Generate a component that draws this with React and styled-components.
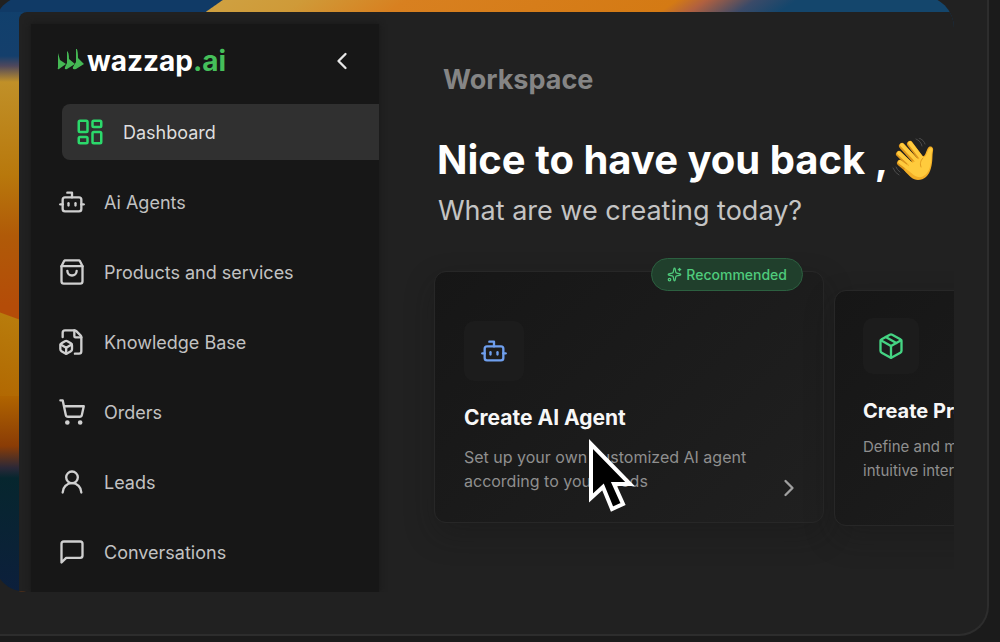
import React from "react";
import styled, { createGlobalStyle } from "styled-components";
import {
  Bot,
  ChevronLeft,
  ChevronRight,
  FileBox,
  LayoutDashboard,
  Package,
  ShoppingCart,
  Sparkles,
  UserRound,
} from "lucide-react";

const GlobalStyle = createGlobalStyle`
* { box-sizing: border-box; }
body {
  margin: 0;
  background: #1b1b1b;
  font-family: Inter, "Liberation Sans", sans-serif;
}
h1, h2, h3, p { margin: 0; }
`;

const Panel = styled.div`
margin-right: 11px;
overflow: hidden;
background: #212121;
border: solid #2d2d2d;
border-width: 0 2px 2px 0;
border-radius: 0 0 30px 0;
`;

const Media = styled.div`
margin: -4px 33px 42px -6px;
padding: 16px 0 0 25px;
overflow: hidden;
border-radius: 32px 32px 0 32px;
background:
  linear-gradient(145deg, #103a66 0, #103a66 134px, #cfa040 135px, #cf9a38 180px, #d88020 240px, #d47a14 395px, #b06040 412px, #3a4a68 440px, #14466c 464px, #14466c 100%) 0 0 / 960px 16px no-repeat,
  linear-gradient(180deg, #b06400 0, #8a3c06 50px, #2a2838 72px, #06262e 82px, #0a2236 150px, #0c1f3c 100%) 0 400px / 25px 196px no-repeat,
  linear-gradient(200deg, transparent 0, transparent 294px, #b87c0c 295px, #b06400 390px) 0 10px / 25px 586px no-repeat,
  linear-gradient(180deg, #10406c 0, #143f6c 60px, #50485c 70px, #c09028 86px, #b8780c 180px, #b05a08 240px, #b44c08 310px) 0 0 / 100% 100% no-repeat;
`;

const Window = styled.div`
display: flex;
background: #212121;
border-radius: 8px 0 0 0;
`;

const Sidebar = styled.aside`
flex: 0 0 348px;
margin: 12px 0 0 12px;
padding-bottom: 12px;
background: #171717;
box-shadow: 0 0 6px #171717;
`;

const Brand = styled.div`
display: flex;
align-items: center;
justify-content: space-between;
height: 74px;
padding: 0 23px 0 26px;
`;

const Logo = styled.a`
display: flex;
align-items: center;
color: #ffffff;
font-size: 28px;
font-weight: 700;
line-height: 32px;
text-decoration: none;
svg { margin-right: 3px; }
span { color: #45bf5a; }
`;

const IconButton = styled.button`
display: flex;
padding: 0;
border: 0;
background: none;
color: ${(props) => props.$color || "#e8e8e8"};
`;

const Nav = styled.nav`
display: flex;
flex-direction: column;
gap: 14px;
margin-top: 6px;
padding-left: 27px;
`;

const NavLink = styled.a`
display: flex;
align-items: center;
gap: 18px;
height: 56px;
margin-left: ${(props) => (props.$active ? "4px" : "0")};
padding-left: ${(props) => (props.$active ? "13px" : "0")};
border-radius: 8px 0 0 8px;
background: ${(props) => (props.$active ? "#303030" : "none")};
color: ${(props) => (props.$active ? "#dedede" : "#c2c2c2")};
font-size: 18px;
text-decoration: none;
svg { color: ${(props) => (props.$active ? "#2bd96b" : "#d0d0d0")}; }
`;

const Main = styled.main`
flex: 1;
min-width: 0;
padding: 52px 0 0 55px;
`;

const Section = styled.h2`
padding-left: 9px;
color: #858585;
font-size: 27px;
font-weight: 700;
line-height: 32px;
`;

const Greeting = styled.h1`
display: flex;
align-items: center;
gap: 4px;
margin-top: 40px;
padding-left: 3px;
color: #ffffff;
font-size: 40px;
font-weight: 700;
line-height: 48px;
white-space: nowrap;
`;

const Question = styled.p`
margin-top: 11px;
padding-left: 4px;
color: #c4c4c4;
font-size: 27px;
line-height: 32px;
`;

const Cards = styled.div`
display: flex;
align-items: flex-start;
gap: 10px;
margin-top: 44px;
`;

const Card = styled.article`
position: relative;
flex: 0 0 ${(props) => (props.$featured ? "390px" : "372px")};
margin-top: ${(props) => (props.$featured ? "0" : "19px")};
padding: ${(props) => (props.$featured ? "49px 29px 29px" : "27px 28px 42px")};
border: 1px solid #272727;
border-radius: 12px;
background: linear-gradient(135deg, #161616, #1a1a1a 40%, #202020);
box-shadow: 0 12px 30px rgba(20, 20, 20, 0.3);
`;

const IconTile = styled.div`
display: flex;
align-items: center;
justify-content: center;
width: ${(props) => (props.$featured ? "60px" : "56px")};
height: ${(props) => (props.$featured ? "60px" : "56px")};
border-radius: 10px;
background: #1c1c1c;
color: ${(props) => props.$color};
`;

const CardTitle = styled.h3`
margin-top: 23px;
color: #f7f7f7;
font-size: ${(props) => (props.$featured ? "21px" : "20px")};
font-weight: 700;
line-height: 28px;
white-space: nowrap;
`;

const CardText = styled.p`
margin-top: ${(props) => (props.$featured ? "13px" : "10px")};
color: #8f8f8f;
font-size: ${(props) => (props.$featured ? "16px" : "15px")};
line-height: 24px;
`;

const Badge = styled.span`
position: absolute;
top: -14px;
right: 20px;
display: flex;
align-items: center;
gap: 4px;
height: 33px;
padding: 0 15px;
border: 1px solid #2c6040;
border-radius: 17px;
background: #203f2c;
color: #4fcb7c;
font-size: 14px;
font-weight: 500;
`;

const CardArrow = styled(IconButton)`
position: absolute;
right: 20px;
bottom: 20px;
`;

const Pointer = styled.svg`
position: absolute;
top: 164px;
left: 152px;
`;

const LogoMark = () => (
  <svg width="27" height="24" viewBox="0 0 27 24" fill="#45b854">
    <path d="M1 4 L3 11 L9 15 L2 20 Q0 21 1 18 Z" />
    <path d="M10 2 Q12 3 12 10 L18 15 L10 20 Q7 21 8 18 L10 14 Z" />
    <path d="M19 -1 Q21 0 21 9 L27 15 L19 20 Q15 21 16 18 L19 13 Z" />
  </svg>
);

const BagIcon = ({ size }) => (
  <svg width={size} height={size} viewBox="0 0 24 24" fill="none" stroke="currentColor" strokeWidth="2" strokeLinecap="round" strokeLinejoin="round">
    <path d="M3 7v13a2 2 0 0 0 2 2h14a2 2 0 0 0 2-2V7l-2-4a2 2 0 0 0-1-1H6a2 2 0 0 0-1 1Z" />
    <path d="M3 7h18" />
    <path d="M16 11a4 4 0 0 1-8 0" />
  </svg>
);

const MessageIcon = ({ size }) => (
  <svg width={size} height={size} viewBox="0 0 24 24" fill="none" stroke="currentColor" strokeWidth="2" strokeLinecap="round" strokeLinejoin="round">
    <path d="M21 15a2 2 0 0 1-2 2H7l-4 4V5a2 2 0 0 1 2-2h14a2 2 0 0 1 2 2z" />
  </svg>
);

const WavingHand = () => (
  <svg width="42" height="44" viewBox="0 0 42 44" fill="none" strokeLinecap="round" strokeLinejoin="round" role="img" aria-label="Waving hand">
    <g stroke="#dc951c" strokeWidth="6">
      <path d="M18 6 L30 22" />
      <path d="M10 8 L26 26" />
      <path d="M7 16 L22 31" />
      <path d="M8 25 L20 35" />
    </g>
    <path d="M15 26 L30 18 C33 20 34 13 36 10 C38 7 42 9 41 13 C40 18 41 23 39 30 C37 38 32 42 26 42 C21 42 17 38 12 32 Z" fill="#f3ae25" />
    <g stroke="#ffcb3d" strokeWidth="4">
      <path d="M18 5 L31 22" />
      <path d="M10 7 L27 25" />
      <path d="M7 15 L22 29" />
      <path d="M8 24 L20 33" />
    </g>
    <path d="M17 27 L30 19 C34 21 35 14 37 11 C39 9 41 10 40 13 C39 18 40 23 38 29 C36 36 31 40 26 39 C22 38 19 35 16 31 Z" fill="#ffcb3d" />
    <path d="M31 20 C28 23 28 26 29 29" stroke="#e09a1e" strokeWidth="1" />
    <path d="M24 1 Q29 3 30 8 M27 0 Q32 2 33 6 M1 30 Q3 35 7 37 M4 29 Q5 32 8 34" stroke="#4c4c4c" strokeWidth="1" />
  </svg>
);

const links = [
  { label: "Dashboard", icon: LayoutDashboard, active: true },
  { label: "Ai Agents", icon: Bot },
  { label: "Products and services", icon: BagIcon },
  { label: "Knowledge Base", icon: FileBox },
  { label: "Orders", icon: ShoppingCart },
  { label: "Leads", icon: UserRound },
  { label: "Conversations", icon: MessageIcon },
];

const App = () => {
  return (
    <>
      <GlobalStyle />
      <Panel>
        <Media>
          <Window>
            <Sidebar>
              <Brand>
                <Logo href="#">
                  <LogoMark />
                  wazzap<span>.ai</span>
                </Logo>
                <IconButton type="button" aria-label="Collapse menu">
                  <ChevronLeft size={28} />
                </IconButton>
              </Brand>
              <Nav>
                {links.map(({ label, icon: Icon, active }) => (
                  <NavLink href="#" key={label} $active={active}>
                    <Icon size={active ? 30 : 28} />
                    {label}
                  </NavLink>
                ))}
              </Nav>
            </Sidebar>
            <Main>
              <Section>Workspace</Section>
              <Greeting>
                Nice to have you back ,
                <WavingHand />
              </Greeting>
              <Question>What are we creating today?</Question>
              <Cards>
                <Card $featured>
                  <Badge>
                    <Sparkles size={15} />
                    Recommended
                  </Badge>
                  <IconTile $featured $color="#6f9fee">
                    <Bot size={28} />
                  </IconTile>
                  <CardTitle $featured>Create AI Agent</CardTitle>
                  <CardText $featured>Set up your own customized AI agent according to your needs</CardText>
                  <CardArrow type="button" aria-label="Create AI Agent" $color="#a0a0a0">
                    <ChevronRight size={28} />
                  </CardArrow>
                  <Pointer width="52" height="78" viewBox="0 0 52 78">
                    <path d="M4 8 V62 L16 51 L25 73 L36 68 L27 48 H43 Z" fill="#000000" stroke="#ffffff" strokeWidth="4" />
                  </Pointer>
                </Card>
                <Card>
                  <IconTile $color="#45d483">
                    <Package size={28} />
                  </IconTile>
                  <CardTitle>Create Product</CardTitle>
                  <CardText>Define and manage products with an intuitive interface</CardText>
                </Card>
              </Cards>
            </Main>
          </Window>
        </Media>
      </Panel>
    </>
  );
};

export default App;
